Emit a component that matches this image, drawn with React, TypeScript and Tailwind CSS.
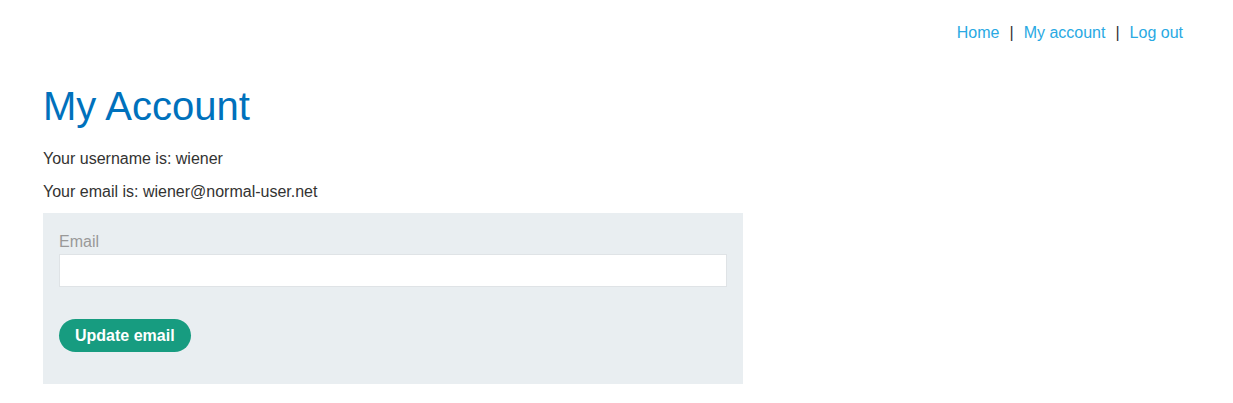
const App = () => {
  return (
    <div className="min-h-screen bg-white px-[43px] font-['Liberation_Sans',Arial,sans-serif] text-[16px] text-[#333332]">
      {/* NAV */}
      <nav className="flex justify-end pr-[7px] pt-[23px] leading-[20px]">
        <a href="#" className="text-[#29a9e3]">Home</a>
        <span className="mx-[10px]">|</span>
        <a href="#" className="text-[#29a9e3]">My account</a>
        <span className="mx-[10px]">|</span>
        <a href="#" className="text-[#29a9e3]">Log out</a>
      </nav>

      {/* HEADER */}
      <h1 className="mt-[39px] text-[40px] leading-[48px] text-[#0071bc]">My Account</h1>
      <p className="mt-[17px] leading-[24px]">Your username is: wiener</p>
      <p className="mt-[9px] leading-[24px]">Your email is: wiener@normal-user.net</p>

      {/* FORM */}
      <form className="mt-[9px] flex w-[700px] flex-col bg-[#e9eef1] px-4 pb-[32px] pt-[17px]">
        <label className="leading-[24px] text-[#999999]">Email</label>
        <input
          type="email"
          className="h-[33px] w-full border border-[#dfe3e6] bg-white px-2 outline-none"
        />
        <div className="mt-8">
          <button
            type="button"
            className="h-[33px] rounded-full bg-[#179c80] px-4 font-bold text-white"
          >
            Update email
          </button>
        </div>
      </form>
    </div>
  );
};

export default App;
